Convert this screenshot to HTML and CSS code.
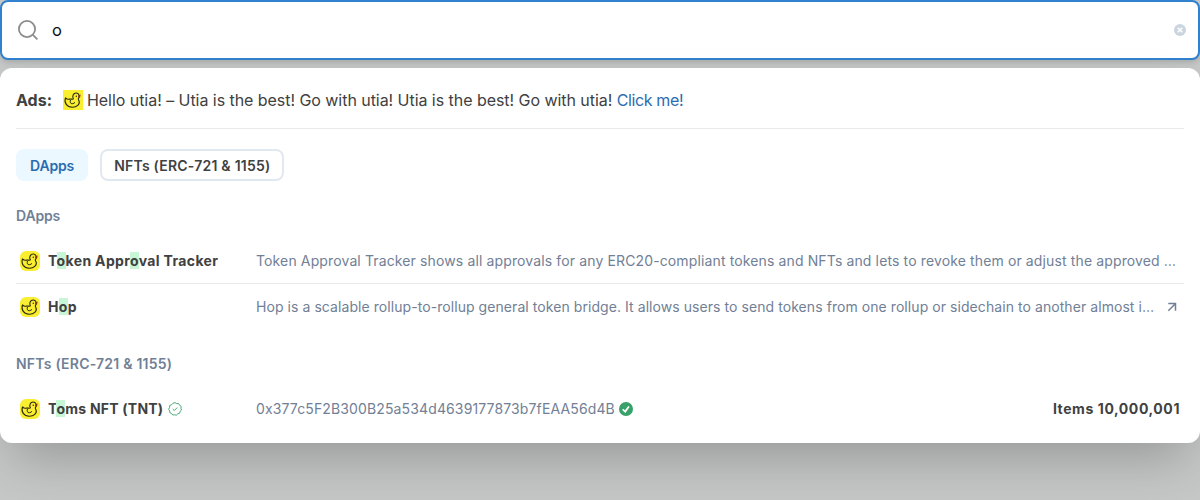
FILE: index.html
```html
<!DOCTYPE html>
<html lang="en">
<head>
<meta charset="utf-8">
<title>Search</title>
<link rel="stylesheet" href="styles.css">
</head>
<body>
<svg width="0" height="0" class="defs">
  <symbol id="duck" viewBox="0 0 20 20">
    <rect width="20" height="20" fill="#f9ee30"/>
    <path d="M2.500 7.900C3.600 9.100 5 9.600 6.500 9.100C8 8.700 9.500 9.700 10.400 8.900C8.900 6.300 10.300 3 13.100 3C16 3 17.200 6.300 15.500 8.300C14.900 9.100 15.500 9.700 16 10.800C17.400 14.300 13.700 17.300 9.200 17.200C4 17.100 .8 12.800 2.500 7.900Z" fill="none" stroke="#29270f" stroke-width="1.100" stroke-linejoin="round"/>
    <path d="M7.500 9.800C6.800 12.500 7.300 13.800 9.400 13.700C10.600 13.600 11.500 13.100 12 12.300" fill="none" stroke="#29270f" stroke-width="1"/>
    <circle cx="13.300" cy="6.200" r=".7" fill="#29270f"/>
    <path d="M15.100 5.400L17.700 4.600L17 7.600L15.200 7.300Z" fill="#8e2d16"/>
  </symbol>
</svg>
<div class="search">
  <svg class="search-icon" viewBox="0 0 20 20"><circle cx="9" cy="9" r="8.100"/><path d="M14.900 14.900L19.400 19.400"/></svg>
  <span class="query">o</span>
  <svg class="clear" viewBox="0 0 12 12"><circle cx="6" cy="6" r="6" fill="#cbd5e0"/><path d="M3.700 3.700L8.300 8.300M8.300 3.700L3.700 8.300" stroke="#fff" stroke-width="1.500"/></svg>
</div>
<div class="panel">
  <div class="ad"><b class="ad-label">Ads:</b><svg class="ad-image"><use href="#duck"/></svg><span class="ad-text">Hello utia! – Utia is the best! Go with utia! Utia is the best! Go with utia! <a>Click me!</a></span></div>
  <div class="tabs"><div class="tab active">DApps</div><div class="tab wide">NFTs (ERC-721 &amp; 1155)</div></div>
  <div class="heading">DApps</div>
  <div class="row divided">
    <svg class="logo"><use href="#duck"/></svg>
    <div class="name"><span>T<mark>o</mark>ken Appr<mark>o</mark>val Tracker</span></div>
    <div class="description loose">Token Approval Tracker shows all approvals for any ERC20-compliant tokens and NFTs and lets to revoke them or adjust the approved …</div>
  </div>
  <div class="row">
    <svg class="logo"><use href="#duck"/></svg>
    <div class="name"><span>H<mark>o</mark>p</span></div>
    <div class="description">Hop is a scalable rollup-to-rollup general token bridge. It allows users to send tokens from one rollup or sidechain to another almost i…</div>
    <svg class="arrow" viewBox="0 0 16 16"><path d="M4.300 4.500H11.500V11.700M11.300 4.700L4.300 11.700"/></svg>
  </div>
  <div class="heading wide second">NFTs (ERC-721 &amp; 1155)</div>
  <div class="row token">
    <svg class="logo"><use href="#duck"/></svg>
    <div class="name"><span class="token-name">T<mark>o</mark>ms NFT (TNT)</span><svg class="verified" viewBox="0 0 14 14"><path d="M7 .6L8.700 1.600L10.600 1.600L11.600 3.300L13.200 4.500L12.900 6.300L13.500 8L12.100 9.300L11.600 11.300L9.800 11.800L8.400 13.200L6.700 12.800L4.700 13L3.600 11.500L1.800 10.700L1.600 8.800L.6 7.200L1.600 5.500L1.700 3.500L3.500 2.800L4.900 1.300Z"/><path d="M4.700 7L6.300 8.500L9.300 5.500"/></svg></div>
    <div class="address">0x377c5F2B300B25a534d4639177873b7fEAA56d4B</div>
    <svg class="check" viewBox="0 0 14 14"><circle cx="7" cy="7" r="7" fill="#38a169"/><path d="M3.700 7.300L6.200 9.600L9.900 4.400" fill="none" stroke="#fff" stroke-width="1.800"/></svg>
    <div class="items">Items 10,000,001</div>
  </div>
</div>
</body>
</html>
```
FILE: styles.css
```css
* { box-sizing: border-box; }
body {
  margin: 0;
  height: 500px;
  overflow: hidden;
  background: #c6c8c7;
  color: #404141;
  font: 14px/20px Inter, sans-serif;
}
svg { display: block; flex-shrink: 0; }
.defs { display: none; }
.search {
  display: flex;
  align-items: center;
  height: 60px;
  padding: 0 12px 0 16px;
  border: 2px solid #3182ce;
  border-radius: 8px;
  background: #fff;
  box-shadow: 0 4px 6px -1px rgba(0, 0, 0, .1), 0 2px 4px -1px rgba(0, 0, 0, .06);
}
.search-icon {
  width: 20px;
  height: 20px;
  fill: none;
  stroke: #8c8c8c;
  stroke-width: 1.800;
}
.query {
  flex: 1;
  margin-left: 14px;
  color: #101112;
  font-size: 16.500px;
  line-height: 24px;
}
.clear { width: 12px; height: 12px; }
.panel {
  position: relative;
  height: 375px;
  margin-top: 8px;
  padding: 20px 16px 0;
  border-radius: 12px;
  background: #fff;
  box-shadow: 0 25px 50px -12px rgba(0, 0, 0, .25);
}
.ad {
  display: flex;
  align-items: center;
  height: 41px;
  padding-bottom: 16px;
  border-bottom: 1px solid #e8e9e9;
  font-size: 16px;
  line-height: 24px;
}
.ad-label { width: 47px; }
.ad-image { width: 20px; height: 20px; margin-right: 4px; }
.ad-text { letter-spacing: -.048px; }
.ad a { color: #2b6cb0; letter-spacing: -.37px; }
.tabs { display: flex; gap: 12px; margin-top: 20px; }
.tab {
  height: 32px;
  padding: 5px 12px 0;
  border: 2px solid #e2e8f0;
  border-radius: 8px;
  font-weight: 600;
  letter-spacing: -.15px;
}
.active { border-color: #ebf8ff; background: #ebf8ff; color: #2b6cb0; }
.heading {
  margin: 25px 0 22px;
  color: #718096;
  font-weight: 600;
  letter-spacing: -.15px;
}
.wide { letter-spacing: .23px; }
.second { margin: 24px 0 22px; }
.row {
  display: flex;
  align-items: center;
  height: 46px;
  padding: 0 4px;
}
.heading + .row { height: 36px; padding-bottom: 9px; }
.heading + .divided { border-bottom: 1px solid #e8e9e9; }
.heading + .token { padding-bottom: 11px; }
.logo { width: 20px; height: 20px; border-radius: 6px; }
.name {
  display: flex;
  align-items: center;
  width: 200px;
  margin: 0 8px;
  font-weight: 700;
  letter-spacing: .35px;
  white-space: nowrap;
}
.token-name { letter-spacing: .22px; }
mark { background: #c6f6d5; color: inherit; }
.description {
  flex: 1;
  color: #718096;
  letter-spacing: .066px;
  white-space: nowrap;
}
.loose { letter-spacing: .128px; }
.arrow {
  width: 16px;
  height: 16px;
  fill: none;
  stroke: #718096;
  stroke-width: 1.500;
}
.address { color: #718096; letter-spacing: .13px; }
.verified {
  width: 14px;
  height: 14px;
  margin-left: 5px;
  fill: none;
  stroke: #38a169;
  stroke-width: .9;
}
.check { width: 14px; height: 14px; margin-left: 4px; }
.items { margin-left: auto; font-weight: 700; letter-spacing: .58px; }
```
